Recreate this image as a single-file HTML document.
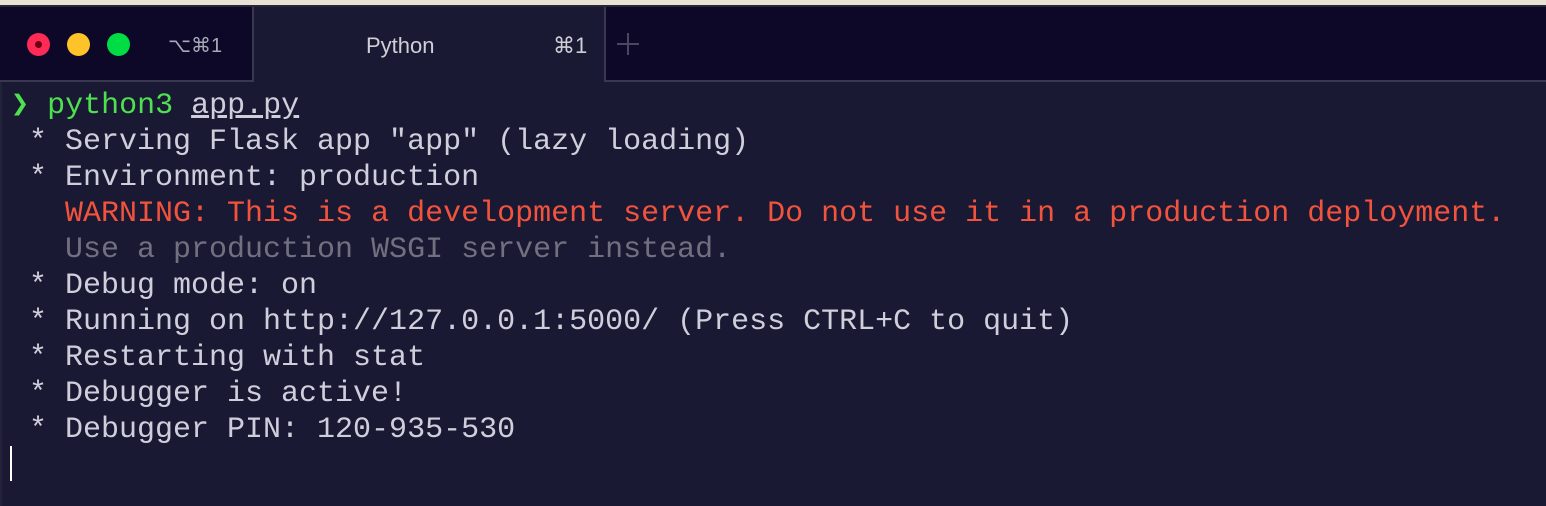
<!DOCTYPE html>
<html><head><meta charset="utf-8"><style>
*{margin:0;padding:0;box-sizing:border-box}
body{width:1546px;height:506px;overflow:hidden;background:#191934;position:relative;font-family:"Liberation Sans",sans-serif}
.top{position:absolute;left:0;top:0;width:1546px;height:5px;background:#e8e2d6}
.line{position:absolute;left:0;top:5px;width:1546px;height:2px;background:#2a2630}
.tabbar{position:absolute;left:0;top:7px;width:1546px;height:73px;background:#0d0827}
.sep{position:absolute;left:0;top:80px;width:1546px;height:2px;background:#3a3850}
.tab{position:absolute;left:252px;top:7px;width:354px;height:75px;background:#191934;border-left:2px solid #3a3850;border-right:2px solid #3a3850}
.dot{position:absolute;top:33px;width:23px;height:23px;border-radius:50%}
.t{position:absolute;color:#cfcfd8;font-size:22px;top:33px}
.term{position:absolute;left:11px;top:88px;font-family:"Liberation Mono",monospace;font-size:30px;line-height:36px;color:#cfcfdc;white-space:pre}
.g{color:#4ee04e}.r{color:#f2533c}.d{color:#70707f}
.cur{position:absolute;left:10px;top:446px;width:2px;height:35px;background:#fff}
.ledge{position:absolute;left:0;top:82px;width:2px;height:424px;background:#232238}
</style></head><body>
<div class="top"></div><div class="line"></div>
<div class="tabbar"></div><div class="sep"></div>
<div class="tab"></div>
<div class="dot" style="left:27px;background:#ff2a55"><div style="position:absolute;left:8px;top:8px;width:7px;height:7px;border-radius:50%;background:#6a0010"></div></div>
<div class="dot" style="left:67px;background:#ffc32a"></div>
<div class="dot" style="left:107px;background:#00dd44"></div>
<div class="t" style="left:168px;color:#a8a8b8;font-size:20px">⌥⌘1</div>
<div class="t" style="left:366px">Python</div>
<div class="t" style="left:553px">⌘1</div>
<div style="position:absolute;left:617px;top:43px;width:22px;height:2px;background:#4a4860"></div>
<div style="position:absolute;left:627px;top:33px;width:2px;height:22px;background:#4a4860"></div>
<div class="ledge"></div>
<div class="term"><span class="g">❯ python3 </span><span style="text-decoration:underline">app.py</span>
 * Serving Flask app "app" (lazy loading)
 * Environment: production
   <span class="r">WARNING: This is a development server. Do not use it in a production deployment.</span>
   <span class="d">Use a production WSGI server instead.</span>
 * Debug mode: on
 * Running on http://127.0.0.1:5000/ (Press CTRL+C to quit)
 * Restarting with stat
 * Debugger is active!
 * Debugger PIN: 120-935-530</div>
<div class="cur"></div>
</body></html>
